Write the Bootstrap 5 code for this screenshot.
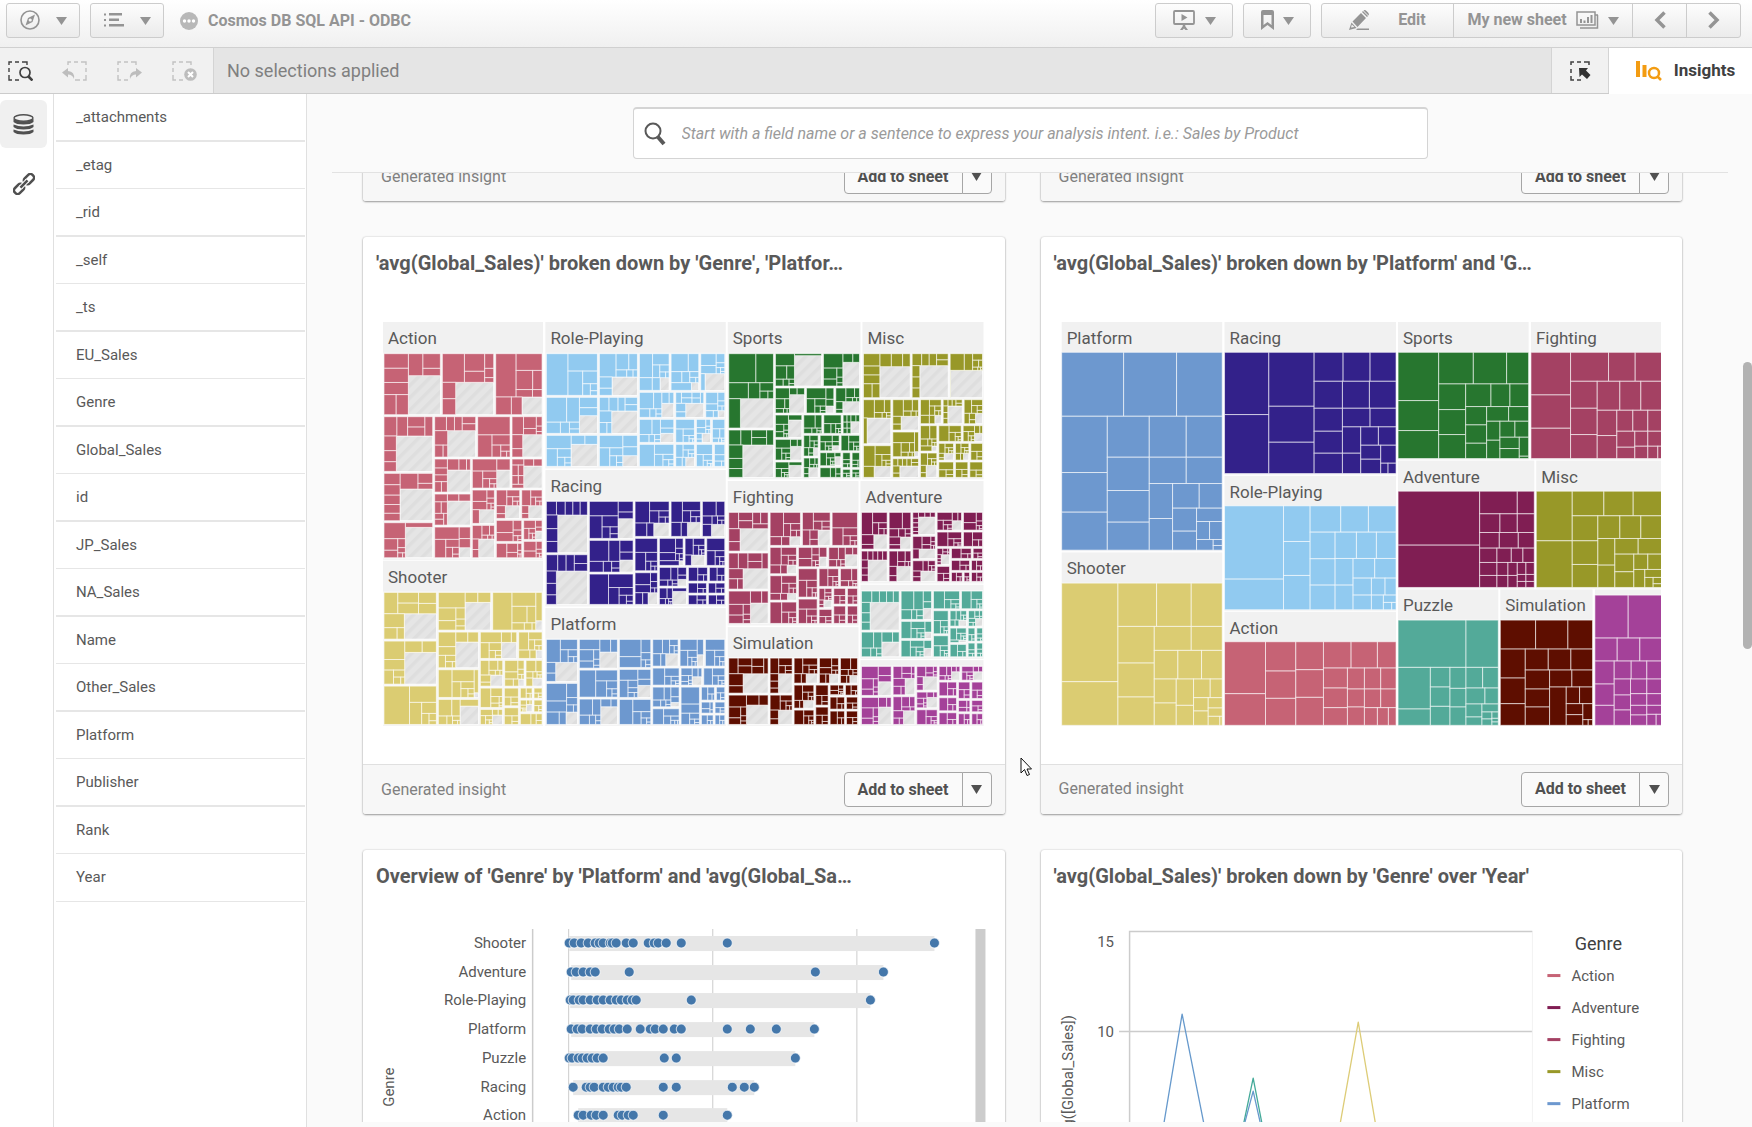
<!DOCTYPE html>
<html lang="en">
<head>
<meta charset="utf-8">
<meta name="viewport" content="width=device-width, initial-scale=1">
<title>Cosmos DB SQL API - ODBC</title>
<link rel="stylesheet" href="https://cdn.jsdelivr.net/npm/bootstrap@5.3.0/dist/css/bootstrap.min.css">
<style>
  body { font-family: Roboto, "Open Sans", sans-serif; background: #fafafa; color: #595959; font-size: 15px; height: 100vh; overflow: hidden; }
  svg { display: block; flex-shrink: 0; }
  .topbar { height: 48px; flex-shrink: 0; padding: 3px 11px 9px 6px; background: linear-gradient(#fff, #f0f0f0); border-bottom: 1px solid #d0d0d0; color: #949494; }
  .tool-btn { height: 35px; padding: 0 0 2px; border: 1px solid #ccc; border-radius: 3px; background: linear-gradient(#fdfdfd, #ebebeb); color: #949494; font-weight: 700; font-size: 16px; line-height: 1; display: flex; align-items: center; justify-content: center; }
  .tool-btn:hover { color: #777; border-color: #bbb; }
  .tool-btn .caret { position: relative; top: 1px; }
  .w-nav { width: 74px; gap: 16px; }
  .w-story { width: 78px; gap: 10px; }
  .w-mark { width: 68px; gap: 9px; }
  .w-edit { width: 133px; gap: 28px; }
  .w-sheet { width: 180px; gap: 9px; }
  .w-step { width: 55px; }
  .bar-gap { gap: 10px; }
  .app-title { font-size: 16px; font-weight: 700; margin-left: 8px; gap: 10px; line-height: 20px; }
  .selbar { height: 46px; flex-shrink: 0; background: #e5e5e5; border-bottom: 1px solid #ccc; font-size: 18px; color: #808080; }
  .sel-tools { width: 214px; background: #f1f1f1; border-right: 1px solid #d4d4d4; padding-right: 1px; justify-content: flex-end; overflow: hidden; }
  .plain-btn { border: 0; background: none; padding: 0; border-radius: 0; display: flex; align-items: center; justify-content: center; flex-shrink: 0; }
  .sel-tools .plain-btn { width: 55px; }
  .sel-tools .plain-btn:first-child { width: 47px; padding-right: 6px; }
  .sel-text { padding-left: 13px; }
  .sel-lasso { width: 58px; background: #f1f1f1; border: solid #d4d4d4; border-width: 0 1px; }
  .insights-btn { width: 143px; margin-bottom: -1px; background: #fff; color: #404040; font-weight: 700; font-size: 17px; gap: 12px; padding-left: 10px; }
  .rail { width: 54px; background: #fff; border-right: 1px solid #e0e0e0; padding-top: 6px; }
  .rail .plain-btn { width: 47px; height: 48px; color: #404040; margin-bottom: 12px; }
  .rail .active { background: #f0f0f0; border-radius: 6px; }
  .fields { width: 253px; background: #fff; border-right: 1px solid #e0e0e0; padding: 0 1px 0 2px; }
  .fields li { height: 47px; line-height: 46px; padding-left: 20px; border-bottom: 1px solid #e6e6e6; }
  .fields li:nth-child(odd) { height: 48px; border-bottom-width: 2px; }
  .fields li:last-child { border-bottom-width: 1px; }
  .main-pane { padding-bottom: 5px; }
  .search-zone { margin: 0 24px 0 25px; padding: 13px 0; height: 79px; flex-shrink: 0; border-bottom: 1px solid #e2e2e2; }
  .search-box { width: 795px; max-width: 100%; height: 52px; border: 1px solid #d4d4d4; border-top-width: 2px; border-radius: 4px; background: #fff; padding-left: 10px; gap: 16px; color: #595959; }
  .search-box input { border: 0; outline: 0; background: none; font-style: italic; font-size: 16px; padding: 0; color: #595959; }
  .search-box input::placeholder { color: #9a9a9a; opacity: 1; }
  .feed { padding: 0 70px 0 56px; overflow: hidden; }
  .feed-grid { display: grid; grid-template-columns: 1fr 1fr; gap: 36px; margin-top: -22px; }
  .insight { background: #fff; border-radius: 3px; box-shadow: 0 1px 2px rgba(0,0,0,.35), 0 0 2px rgba(0,0,0,.2); min-width: 0; }
  .insight h2 { font-size: 20px; line-height: 24px; font-weight: 700; margin: 0; padding: 14px 0 0 13px; height: 85px; white-space: nowrap; color: #595959; }
  .insight.lower h2 { height: 50px; }
  .tree-box { padding: 0 21px 38px 20px; }
  .insight-foot { height: 50px; background: #f7f7f7; border-top: 1px solid #e0e0e0; border-radius: 0 0 3px 3px; padding: 0 13px 0 18px; color: #808080; font-size: 16px; }
  .add-group .btn { height: 35px; border: 1px solid #a6a6a6; border-radius: 4px; background: #fafafa; color: #505050; font-weight: 700; font-size: 16px; line-height: 1; padding: 0; }
  .add-main { width: 119px; }
  .add-more { width: 30px; }
  .feed svg { width: 100%; height: auto; }
  .feed .add-more svg { width: 11px; margin: auto; }
  .feed text { font-size: 15px; fill: #595959; }
  .feed .group-name { font-size: 51px; }
  .feed .legend-title { font-size: 18px; fill: #404040; }
  .side-scroll { position: absolute; right: 0; top: 268px; width: 9px; height: 287px; background: #b2b2b2; border-radius: 5px; }
  .pointer { position: absolute; left: 713px; top: 663px; }
</style>
<script src="https://cdn.jsdelivr.net/npm/bootstrap@5.3.0/dist/js/bootstrap.bundle.min.js"></script>
</head>
<body class="d-flex flex-column">
<svg width="0" height="0" class="position-absolute" aria-hidden="true">
  <defs>
    <symbol id="i-caret" viewBox="0 0 11 8"><path d="M0 0H11L5.500 8Z" fill="currentColor"/></symbol>
    <pattern id="hatch" width="26" height="26" patternUnits="userSpaceOnUse" patternTransform="rotate(45)"><rect width="26" height="26" fill="#e5e5e5"/><rect width="10" height="26" fill="#dedede"/></pattern>
  </defs>
</svg>

<header class="topbar d-flex align-items-center">
  <div class="d-flex bar-gap">
  <button class="btn tool-btn w-nav" aria-label="Navigation">
    <svg width="20" height="20" viewBox="0 0 20 20" fill="none" stroke="currentColor" stroke-width="1.600"><circle cx="10" cy="10" r="9"/><path d="M15 4.500L12.500 12L5.500 15.500L8 8Z" fill="currentColor" stroke="none"/><circle cx="10.200" cy="10" r="1.600" fill="#f5f5f5" stroke="none"/></svg>
    <svg class="caret" width="11" height="8"><use href="#i-caret"/></svg></button>
  <button class="btn tool-btn w-nav" aria-label="App menu">
    <svg width="20" height="14" viewBox="0 0 20 14" fill="currentColor"><path d="M0 .500h2v2H0zM5 0h13v2.500H5zM0 6h2v2H0zM5 5.500h10v2.500H5zM0 11.500h2v2H0zM5 11h15v2.500H5z"/></svg>
    <svg class="caret" width="11" height="8"><use href="#i-caret"/></svg></button>
  </div>
  <div class="app-title d-flex align-items-center flex-grow-1 ps-2 ms-2">
    <svg width="18" height="18" viewBox="0 0 18 18"><circle cx="9" cy="9" r="9" fill="#b8b8b8"/><g fill="#fff"><circle cx="4.500" cy="9" r="1.700"/><circle cx="9" cy="9" r="1.700"/><circle cx="13.500" cy="9" r="1.700"/></g></svg>
    <span>Cosmos DB SQL API - ODBC</span>
  </div>
  <div class="d-flex bar-gap">
    <button class="btn tool-btn w-story" aria-label="Stories">
      <svg width="22" height="20" viewBox="0 0 22 20" fill="none" stroke="currentColor" stroke-width="1.800"><rect x="1" y="1" width="20" height="13" rx="1"/><path d="M8.500 4V11L14.500 7.500Z" fill="currentColor" stroke="none"/><path d="M11 14V17" stroke-width="2.500"/><path d="M7 20L9.500 16.500H12.500L15 20H12.500L11 18.500L9.500 20Z" fill="currentColor" stroke="none"/></svg>
      <svg class="caret" width="11" height="8"><use href="#i-caret"/></svg></button>
    <button class="btn tool-btn w-mark" aria-label="Bookmarks">
      <svg width="13" height="20" viewBox="0 0 13 20" fill="currentColor"><path fill-rule="evenodd" d="M2 0H11Q13 0 13 2V20L6.500 15L0 20V2Q0 0 2 0ZM2.500 5V15L6.500 12L10.500 15V5Z"/></svg>
      <svg class="caret" width="11" height="8"><use href="#i-caret"/></svg></button>
    <div class="btn-group">
      <button class="btn tool-btn w-edit">
        <svg width="21" height="20" viewBox="0 0 21 20" fill="currentColor"><path fill-rule="evenodd" d="M0 20L2.500 12.500L7.500 18ZM2.800 14.500L2 17.500L5.500 17ZM3.500 11.500L12 3L17 8L8.500 17ZM13 2L14 1L19 6L18 7ZM14.500 .500Q16 -.500 17.500 1L19 2.500Q20.500 4 19.500 5.500ZM8.500 18.500H20V20H7Z"/></svg>
        Edit</button>
      <button class="btn tool-btn w-sheet">My new sheet
        <svg width="23" height="18" viewBox="0 0 23 18" fill="none" stroke="currentColor" stroke-width="1.500"><path d="M1 1H19V14H1ZM21.500 4V17H4M19 4H22"/><path d="M5 12V8M8.500 12V9.500M12 12V6M15.500 12V4" stroke-width="2"/></svg>
        <svg class="caret" width="11" height="8"><use href="#i-caret"/></svg></button>
      <button class="btn tool-btn w-step" aria-label="Previous sheet"><svg width="12" height="18" viewBox="0 0 12 18" fill="none" stroke="currentColor" stroke-width="3.500"><path d="M10.500 1.500L3 9L10.500 16.500"/></svg></button>
      <button class="btn tool-btn w-step" aria-label="Next sheet"><svg width="12" height="18" viewBox="0 0 12 18" fill="none" stroke="currentColor" stroke-width="3.500"><path d="M1.500 1.500L9 9L1.500 16.500"/></svg></button>
    </div>
  </div>
</header>

<div class="selbar d-flex">
  <div class="sel-tools d-flex">
    <button class="plain-btn" aria-label="Selections tool"><svg width="25" height="20" viewBox="0 0 25 20" fill="none" stroke="#404040" stroke-width="1.400"><path d="M1 4V1H4M7 1H11M14 1H19V4M1 7V11M1 14V19H4M7 19H11"/><circle cx="17" cy="11.500" r="5" stroke-width="1.700"/><path d="M20.500 15.500L24.500 19.500" stroke-width="2.600"/></svg></button>
    <button class="plain-btn" aria-label="Step back" disabled><svg width="25" height="20" viewBox="0 0 25 20" fill="none" stroke="#c2c2c2" stroke-width="1.400"><path d="M6 4V1H9M12 1H16M19 1H24V4M24 7V11M24 14V19H21M18 19H13"/><path d="M0 11.500L6 7V10Q13 10.500 12 18Q10.500 13.500 6 13.500V16.500Z" fill="#bdbdbd" stroke="none"/></svg></button>
    <button class="plain-btn" aria-label="Step forward" disabled><svg width="25" height="20" viewBox="0 0 25 20" fill="none" stroke="#c2c2c2" stroke-width="1.400"><path d="M1 4V1H4M7 1H11M14 1H19V4M1 7V11M1 14V19H4M7 19H11"/><path d="M25 11.500L19 7V10Q12 10.500 13 18Q14.500 13.500 19 13.500V16.500Z" fill="#bdbdbd" stroke="none"/></svg></button>
    <button class="plain-btn" aria-label="Clear all selections" disabled><svg width="25" height="20" viewBox="0 0 25 20" fill="none" stroke="#c2c2c2" stroke-width="1.400"><path d="M1 4V1H4M7 1H11M14 1H19V4M1 7V11M1 14V19H4M7 19H11"/><circle cx="18.500" cy="13.500" r="6.300" fill="#bdbdbd" stroke="none"/><path d="M16 11L21 16M21 11L16 16" stroke="#fff" stroke-width="2"/></svg></button>
  </div>
  <div class="sel-text flex-grow-1 d-flex align-items-center">No selections applied</div>
  <button class="plain-btn sel-lasso" aria-label="Selection insights"><svg width="21" height="20" viewBox="0 0 21 20" fill="none" stroke="#404040" stroke-width="1.500"><path d="M1 4V1H4M7 1H11M14 1H19V4M1 8V12M1 15V19H4M7 19H11"/><path d="M9 7H18L16 9.500L20.500 14L17 18L12 13.500L9.500 16Z" fill="#333" stroke="none"/></svg></button>
  <button class="plain-btn insights-btn"><svg width="26" height="20" viewBox="0 0 26 20"><path d="M0 0H4V16H0ZM6.500 4H10.500V16H6.500Z" fill="#f39c12"/><circle cx="18" cy="12" r="5" fill="none" stroke="#f39c12" stroke-width="2.500"/><path d="M21.500 15.500L25 19" stroke="#f39c12" stroke-width="2.500"/></svg>Insights</button>
</div>

<div class="d-flex flex-grow-1 position-relative" style="min-height:0">
  <nav class="rail" aria-label="Asset panels">
    <button class="plain-btn active" aria-label="Fields"><svg width="21" height="21" viewBox="0 0 21 21" fill="#505050"><ellipse cx="10.500" cy="4" rx="9.500" ry="3.200" fill="none" stroke="#505050" stroke-width="1.400"/><path d="M.500 5Q10.500 10 20.500 5V8Q18 10.500 10.500 10.500T.500 8ZM.500 10.500Q10.500 14.500 20.500 10.500V13Q18 15.500 10.500 15.500T.500 13ZM.500 15.500Q10.500 19.500 20.500 15.500V18Q18 20.500 10.500 20.500T.500 18Z"/></svg></button>
    <button class="plain-btn" aria-label="Master items"><svg width="22" height="22" viewBox="0 0 22 22" fill="none" stroke="#505050" stroke-width="2.500"><g transform="rotate(-45 11 11)"><rect x="-1.500" y="7.500" width="11" height="7" rx="3"/><rect x="12.500" y="7.500" width="11" height="7" rx="3"/><path d="M6 11H16" stroke="#fff" stroke-width="4.500"/><path d="M6 11H16"/></g></svg></button>
  </nav>
  <ul class="fields list-unstyled mb-0">
    <li>_attachments</li><li>_etag</li><li>_rid</li><li>_self</li><li>_ts</li><li>EU_Sales</li><li>Genre</li><li>Global_Sales</li><li>id</li><li>JP_Sales</li><li>NA_Sales</li><li>Name</li><li>Other_Sales</li><li>Platform</li><li>Publisher</li><li>Rank</li><li>Year</li>
  </ul>
  <main class="main-pane flex-grow-1 d-flex flex-column position-relative" style="min-width:0">
    <div class="search-zone d-flex justify-content-center">
      <label class="search-box d-flex align-items-center">
        <svg width="22" height="24" viewBox="0 0 22 24" fill="none" stroke="#595959"><circle cx="9" cy="9" r="7.500" stroke-width="2"/><path d="M14 15L20 22" stroke-width="4"/></svg>
        <input class="flex-grow-1" type="text" aria-label="Search insights" placeholder="Start with a field name or a sentence to express your analysis intent. i.e.: Sales by Product">
      </label>
    </div>
    <div class="feed flex-grow-1">
      <div class="feed-grid">
        <article class="insight"><div class="foot-slot"></div></article>
        <article class="insight"><div class="foot-slot"></div></article>
        <article class="insight"><h2>'avg(Global_Sales)' broken down by 'Genre', 'Platfor…</h2>
          <div class="tree-box"><svg id="treeDetail" viewBox="68 36 1801 1212" role="img" aria-label="Treemap by genre, platform and publisher"></svg></div><div class="foot-slot"></div></article>
        <article class="insight"><h2>'avg(Global_Sales)' broken down by 'Platform' and 'G…</h2>
          <div class="tree-box"><svg id="treePlain" viewBox="60 36 1803 1212" role="img" aria-label="Treemap by genre and platform"></svg></div><div class="foot-slot"></div></article>
        <article class="insight lower"><h2>Overview of 'Genre' by 'Platform' and 'avg(Global_Sa…</h2>
          <svg id="dots" viewBox="1 0 641 240" role="img" aria-label="Distribution plot"></svg></article>
        <article class="insight lower"><h2>'avg(Global_Sales)' broken down by 'Genre' over 'Year'</h2>
          <svg id="lines" viewBox="1 0 641 240" role="img" aria-label="Line chart">
            <g fill="none" stroke="#ccc"><path d="M89.500 240V31.500H492M79 131.500H492" stroke-width="1.500"/><path d="M492 32V240" stroke="#f2f2f2"/></g>
            <g fill="none" stroke-width="1.300" stroke-linejoin="round"><path d="M121 240L142 114L167 240" stroke="#6699cc"/><path d="M200 240L213 178L225 240" stroke="#44aa99"/><path d="M200 240L213 191L224 240" stroke="#6699cc"/><path d="M297 240L318 122L338 240" stroke="#ddcc77"/></g>
            <text x="74" y="47" text-anchor="end">15</text><text x="74" y="137" text-anchor="end">10</text>
            <text transform="translate(33 115) rotate(-90)" text-anchor="end">avg([Global_Sales])</text>
            <text class="legend-title" x="558" y="50" text-anchor="middle">Genre</text>
          </svg></article>
      </div>
    </div>
    <svg class="pointer" width="12" height="20" viewBox="0 0 12 20"><path d="M1 1V16L4.500 12.500L7 18.500L9.500 17.500L7 12H11.500Z" fill="#fff" stroke="#111"/></svg>
    <div class="side-scroll"></div>
  </main>
</div>

<script>
document.querySelectorAll('.foot-slot').forEach(s => {
  s.className = 'insight-foot d-flex align-items-center justify-content-between';
  s.innerHTML = '<span>Generated insight</span><div class="btn-group add-group"><button class="btn add-main">Add to sheet</button><button class="btn add-more" aria-label="More options"><svg width="11" height="9" viewBox="0 0 11 9"><path d="M0 0H11L5.5 9Z" fill="currentColor"/></svg></button></div>';
});

const hue = { Action:'#c66375', 'Role-Playing':'#91caf0', Racing:'#33218a', Platform:'#6d98cf', Sports:'#27762f', Misc:'#989828', Shooter:'#dbcc72', Fighting:'#a44163', Adventure:'#801e53', Puzzle:'#53aa99', Simulation:'#5e0e00', Strategy:'#a44199' };
const box = (x0, y0, x1, y1, fill, extra = '') => `<rect x="${x0}" y="${y0}" width="${Math.max(0, x1 - x0)}" height="${Math.max(0, y1 - y0)}" fill="${fill}" ${extra}/>`;

// Cuts an area into strips: "c" is a column ending at x, "r" a row ending at y, then the breaks inside it.
function strips(area, spec) {
  let [x0, y0, x1, y1] = area; const out = [];
  for (const part of spec.split(';')) {
    const [head, tail] = part.split(':'), at = +head.slice(1);
    const cuts = tail ? tail.split(',').map(Number) : [];
    if (head[0] === 'c') { [y0, ...cuts].forEach((a, i) => out.push([x0, a, at, cuts[i] ?? y1])); x0 = at; }
    else { [x0, ...cuts].forEach((a, i) => out.push([a, y0, cuts[i] ?? x1, at])); y0 = at; }
  }
  out.push([x0, y0, x1, y1]);
  return out;
}
let seed = 7;
const rnd = () => (seed = (seed * 16807) % 2147483647) / 2147483647;
// Squarified split of an area into n cells of falling weight.
function squarify(x0, y0, x1, y1, n, fall) {
  let ws = Array.from({ length: n }, (_, i) => Math.pow(fall, i) * (0.85 + rnd() * 0.3)).sort((a, b) => b - a);
  const sum = ws.reduce((a, b) => a + b, 0), A = (x1 - x0) * (y1 - y0), out = [];
  ws = ws.map(w => w / sum * A);
  while (ws.length) {
    const side = Math.min(x1 - x0, y1 - y0); let k = 1, best = Infinity;
    for (let j = 1; j <= ws.length; j++) {
      const row = ws.slice(0, j), s = row.reduce((a, b) => a + b, 0);
      const worst = Math.max(side * side * row[0] / (s * s), s * s / (side * side * row[j - 1]));
      if (worst > best) break; best = worst; k = j;
    }
    const row = ws.splice(0, k), s = row.reduce((a, b) => a + b, 0);
    if (x1 - x0 >= y1 - y0) { const w = s / (y1 - y0); let y = y0; row.forEach(v => { out.push([x0, y, x0 + w, y + v / w]); y += v / w; }); x0 += w; }
    else { const h = s / (x1 - x0); let x = x0; row.forEach(v => { out.push([x, y0, x + v / h, y0 + h]); x += v / h; }); y0 += h; }
  }
  return out;
}
function drawTree(id, groups, detailed) {
  let h = '';
  for (const [name, dx, gx0, gx1, top, y0, y1, spec, holes] of groups) {
    const c = hue[name], edge = `stroke="#fff" stroke-opacity=".6" stroke-width="3"`;
    let g = box(gx0, top, gx1, y1 + 3, '#f1f1f1');
    if (y0 - top > 50) g += `<text class="group-name" x="${gx0 + 15}" y="${top + 66}">${name}</text>`;
    const pts = (holes || '').split(' ').filter(Boolean).map(p => p.split(',').map(Number));
    for (const [a, b, d, e] of strips([gx0, y0, gx1, y1], spec)) {
      if (!detailed) { g += box(a, b, d, e, c, edge); continue; }
      const L = a + 3, T = b + 3, R = d - 3, B = e - 3, p = pts.find(q => q[0] > L && q[0] < R && q[1] > T && q[1] < B);
      g += box(a, b, d, e, '#f8f8f8');
      let cells;
      if (p) {
        // The hatched remainder sits bottom right; the wider arm of the L around it takes the corner.
        const tall = p[0] - L > p[1] - T, ax = tall ? p[0] : L, ay = tall ? T : p[1];
        const up = (R - ax) * (p[1] - T), left = (p[0] - L) * (B - ay), n = 8;
        const u = Math.max(1, Math.round(n * up / (up + left))), l = Math.max(1, n - u);
        const arm = (w, t) => w > t * 2.2 ? .88 : .6;
        cells = [...squarify(ax, T, R, p[1], u, arm(R - ax, p[1] - T)), ...squarify(L, ay, p[0], B, l, arm(B - ay, p[0] - L))];
        g += box(p[0], p[1], R, B, 'url(#hatch)', 'stroke="#fff" stroke-width="2"');
      } else cells = squarify(L, T, R, B, (R - L) * (B - T) > 2500 ? 7 : 4, .56);
      cells.forEach(q => g += box(...q, c, edge));
    }
    h += `<g transform="translate(${dx} 0)">${g}</g>`;
  }
  document.getElementById(id).innerHTML = h;
}
drawTree('treePlain', [
  ['Platform',0,62,544,36,127,721,'r319:248,407;c199:488,607;c325:442,542,637;r442:436;r521:436;c395:626;r595:475;c467:664;r635;r689:506;c517;r707'],
  ['Shooter',0,62,544,728,820,1247,'c231:1116;r950:347,451;c340:1060,1162;r1022:451;r1108:411,482;c406:1180;c458:1187;r1164:508;c502:1204;r1195;r1220;c537'],
  ['Racing',0,551,1066,36,127,491,'c684:314;c820:289,397;r214:907,988;c905:295,364,430;r295:986;r351:988;c960:430;r406:1013;c1020:448;r460;c1042'],
  ['Role-Playing',0,551,1066,498,588,900,'c728:808;c808:695,797;r667:900,983;c883:747,826;r746:947,1007;c937:826;r805:1002;c992:856;r856:1033;c1028;r878;c1053'],
  ['Action',0,551,1066,906,996,1247,'c674:1152;c765:1084,1166;c848:1080,1163;r1075:931,1010;c920:1135,1194;c971:1138,1192;r1138:1020;r1194:1020;c1010;c1043'],
  ['Sports',1020,52,444,36,127,446,'c174:272,362;r222:278,378;c255:299,374;r290:331,388;c318:345,400;r334:384;c358:391;r382:403;c416:416;r439'],
  ['Fighting',1020,451,843,36,127,446,'c570:255,355;r214:684,764;c650:295,374;r301:718,781;c709:377;r364:757,802;c763:412;r409:802;c802;c832'],
  ['Adventure',1020,52,461,452,544,833,'c297:706;r612:410;r668:358,410;r715:356,413;r758:349,392,427;c349:797;c382:797;c410:797;r794:436;r815:436;c436'],
  ['Misc',1020,467,843,452,544,833,'c575:693;r618:670,758;c652:693,764;r686:718,781;c703:766;r733:773;c760:786;r779:802;c793;r803;c818;r822'],
  ['Puzzle',1020,52,353,839,931,1247,'r1073:256;c149:1198;c208:1132,1190;c256:1136,1192;r1135:306;r1183:313;c304:1222;r1207;c334:1228;r1226;r1237'],
  ['Simulation',1020,359,636,839,931,1247,'r1018:465,562;c434:1105,1182;r1081:503,571;c507:1138,1192;r1132:574;c557;r1182:597;c607:1215;r1230;c623'],
  ['Strategy',1020,643,843,839,856,1247,'r985:743;r1054:710,778;c701:1123,1187;r1108:752,799;c750:1156,1201;r1152:799;r1187:799;c799:1216;r1214;c827']
], false);
drawTree('treeDetail', [
  ['Action',0,68,548,36,128,746,'r317:243,403;c220:487,635;r444:349,452;c333:549,648;r537:452;c405:643;r628:481;c487:697;r691','144,197 286,217 485,261 108,378 119,537 135,652 262,362 487,374 261,480 409,480 490,468 261,573 296,713 357,599 355,687 435,587 505,587 525,663'],
  ['Shooter',0,68,548,752,844,1246,'c231:990,1125;r963:394;c357:1076,1165;r1048:472;r1131:430,494;c429:1195;c477:1190;r1167:518;r1208:518','132,911 133,1027 314,877 286,996 299,1188 526,932 423,997 527,1020 341,1148 391,1095 475,1107 517,1104 396,1215 498,1183'],
  ['Role-Playing',0,555,1096,36,128,472,'c714:259,373;c834:259,373;r244:929,1018;r325:943,1033;r400:943,1005,1053;c943;c1005;c1059','755,201 657,317 632,403 754,303 787,437 899,203 904,280 900,370 976,442 993,218 1034,191 976,280 1073,302 1025,370'],
  ['Racing',0,555,1096,480,571,886,'c684:731;c821:688,789;r682:929,1023;c894:785;r769:971,1036;c981:831;r816:1044;r852:1041;c1041','592,615 588,783 773,626 778,750 880,639 981,637 1053,643 956,752 993,735 952,808 936,844 863,848'],
  ['Platform',0,555,1096,894,985,1246,'c654:1117;c774:1077,1164;c874:1075,1165;r1071:956,1032;r1128:959,1027;c959:1193;c1020;r1173:1065;r1212:1061;c1061','586,1057 617,1206 718,1026 721,1190 832,1126 916,1031 931,1177 1010,1034 995,1100'],
  ['Sports',990,112,510,36,128,505,'c252:357;r231:396;r312:345,433;c337:385,453;r373:397,455;c386:441;r425:449;c454:470;r475:482;c482','150,266 157,405 312,137 457,157 297,254 406,288 457,275 294,330 300,409 295,466 481,335 369,413 355,473 425,407 433,440'],
  ['Misc',990,516,879,36,128,505,'r266:662,776;c604:404;c687:363,443;r344:755,818;c742:426;r397:815;r453:792,838;c792;c835','568,170 688,167 780,181 530,324 632,319 772,288 733,316 855,310 551,469 628,468 672,425 707,466 761,430 724,408 852,370 819,430'],
  ['Fighting',990,112,504,513,604,943,'c236:726,840;r709:333,422;c321:794,873;r773:412;c383:864;r832:447;c427:895;r885:468;c468','149,656 158,776 180,879 298,680 383,660 290,765 291,850 386,741 464,734 400,870'],
  ['Simulation',990,112,504,951,1041,1246,'c236:1152;c308:1152;r1122:384,447;c373:1197;c416:1188;r1158:462;r1200:465;c465','158,1091 168,1185 264,1091 264,1200 347,1091 339,1171 417,1092 478,1096 446,1154'],
  ['Adventure',990,510,879,513,604,817,'c593:720;c664:720;c737:676,749;r663:816;r712:816;c780:766;r748:845;r784:840;c818;c840','550,674 533,750 630,681 619,769 684,621 686,717 691,783 785,632 752,734'],
  ['Puzzle',990,510,879,824,840,1043,'c629:963;c726:931,988;r899:810;c776:974;r951:831;c830:1000;r996:856;c856','539,877 574,996 698,895 703,966 700,1015 805,930 855,925 805,990'],
  ['Strategy',990,510,879,1050,1066,1246,'c605:1159;c676:1157;c743:1143,1196;r1113:811;c801:1160,1205;r1168:841;r1208:841;c841','563,1115 564,1191 644,1105 639,1202 698,1100 709,1162 783,1085 848,1085']
], true);

// Distribution plot: one row per genre.
const plot = [
  ['Shooter',[498,510,524,540,556,565,574,590,596,605,626,644,676,690,700,719,751,857,1327]],
  ['Adventure',[503,513,529,546,557,634,1056,1211]],
  ['Role-Playing',[500,506,520,530,545,562,575,591,605,615,630,640,650,774,1182]],
  ['Platform',[502,516,528,545,558,573,588,600,612,629,659,682,692,712,736,751,856,908,968,1055]],
  ['Puzzle',[497,505,517,528,538,549,562,575,713,740,1012]],
  ['Racing',[507,537,546,555,574,586,597,608,616,626,710,740,867,895,919]],
  ['Action',[517,530,547,560,574,610,618,632,644,711,857]]
];
let s = '<path d="M170.500 29V240" stroke="#ccc" stroke-width="1.500"/><path d="M206.500 29V240M350.500 29V240M494.500 29V240" stroke="#ccc"/><rect x="613" y="29" width="10" height="211" fill="#ccc"/><text transform="translate(32 187) rotate(-90)" text-anchor="middle">Genre</text>';
const px = v => Math.round(v / 2.272 - 12);
plot.forEach(([n, v], i) => {
  const y = Math.round(43 + i * 28.7);
  s += `<text x="164" y="${y + 5}" text-anchor="end">${n}</text>` + box(px(v[0]), y - 7, px(v[v.length - 1]), y + 8, '#e6e6e6');
  v.forEach(d => s += `<circle cx="${px(d)}" cy="${y}" r="5" fill="#4477aa" stroke="#fff" stroke-opacity=".7"/>`);
});
document.getElementById('dots').innerHTML = s;
document.getElementById('lines').insertAdjacentHTML('beforeend', ['Action','Adventure','Fighting','Misc','Platform'].map((n, i) => box(507, 74 + i * 32, 520, 77 + i * 32, hue[n]) + `<text x="531" y="${81 + i * 32}">${n}</text>`).join(''));
</script>
</body>
</html>
